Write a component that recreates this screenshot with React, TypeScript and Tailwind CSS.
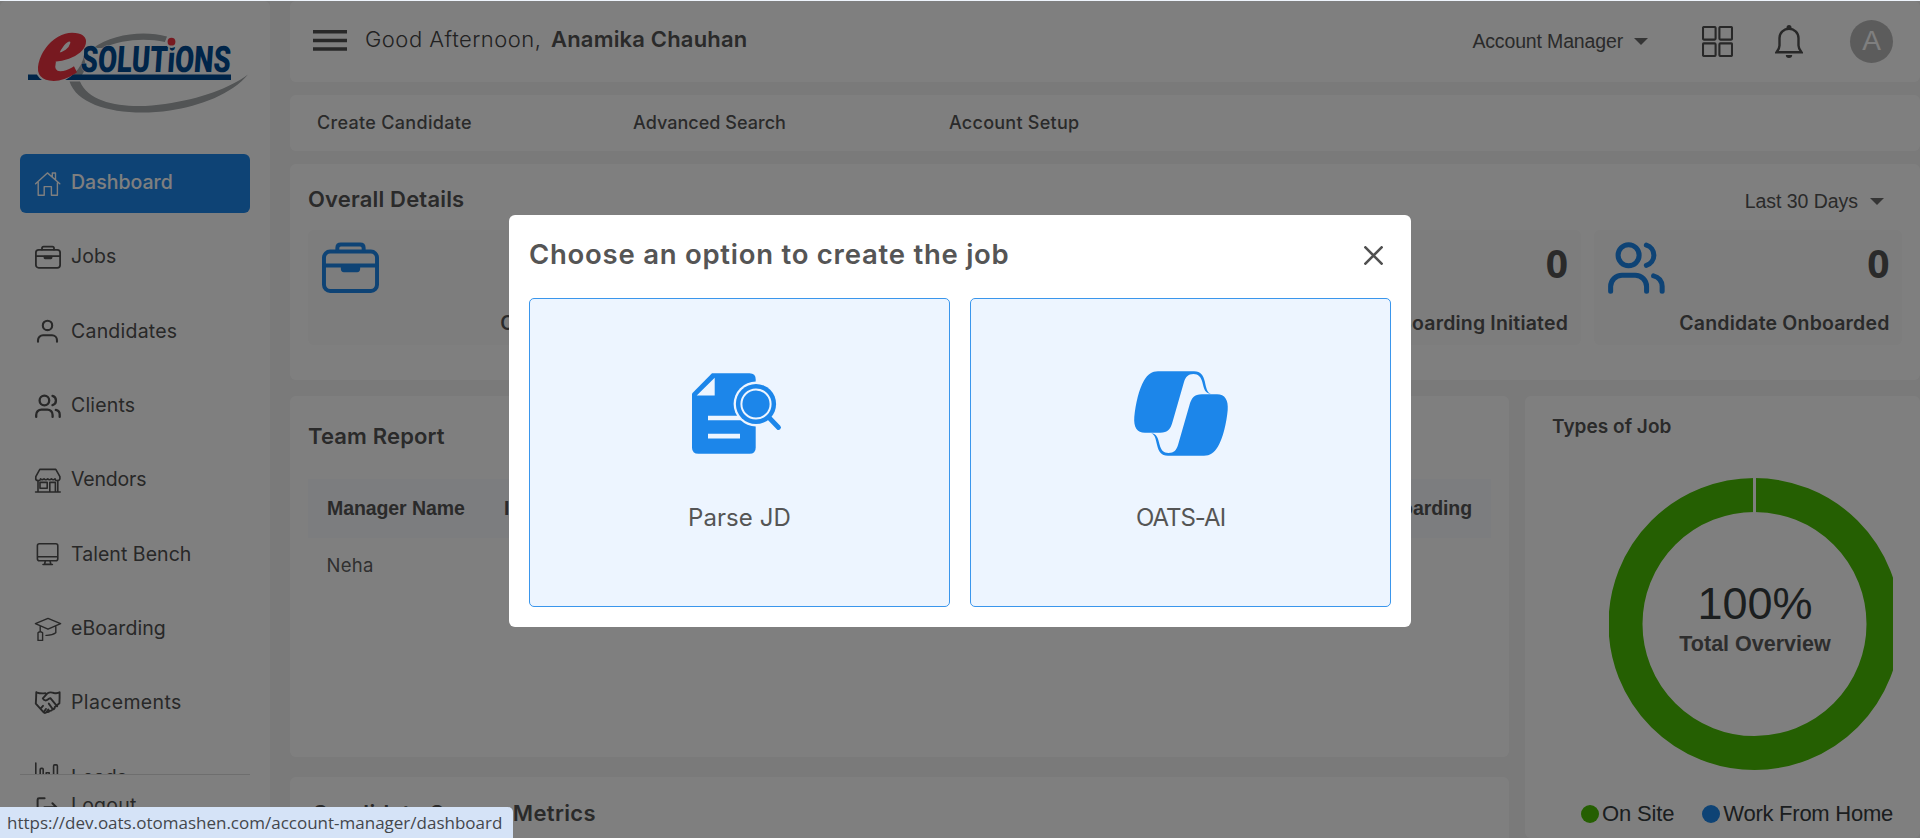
import type { ReactNode } from "react";

const INTER = "font-['Inter',sans-serif]";
const ARIAL = "font-['Liberation_Sans',Arial,sans-serif]";

type SvgProps = { className?: string; children?: ReactNode };

function Icon({ className = "size-[26px]", children }: SvgProps) {
  return (
    <svg
      viewBox="0 0 26 26"
      className={`shrink-0 overflow-visible ${className}`}
      fill="none"
      stroke="currentColor"
      strokeWidth="1.6"
      strokeLinecap="round"
      strokeLinejoin="round"
    >
      {children}
    </svg>
  );
}

const HomeIcon = () => (
  <Icon>
    <path d="M.6 12.8 12.4 1.9 24.8 12.8M17.3 5.6V2h3.2v6.6M3.2 11.4v12.8h6v-8.6h7.2v8.6h6V11.4" strokeWidth="1.4" />
  </Icon>
);

const BriefcaseIcon = ({ className }: SvgProps) => (
  <Icon className={className}>
    <g strokeWidth="1.8">
      <rect x=".9" y="4.8" width="24.2" height="18" rx="2.8" />
      <path d="M7 4.6V3.2Q7 1.6 8.6 1.6h8.8Q19 1.6 19 3.2v1.4M1 11.2h24" />
      <path d="M9.5 11.6h7v1.2q0 .5-.5.5H10q-.5 0-.5-.5z" fill="currentColor" />
    </g>
  </Icon>
);

const UserIcon = () => (
  <Icon>
    <g strokeWidth="2.1">
      <circle cx="12.5" cy="6.4" r="4.7" />
      <path d="M3 22.8v-1.6a5 5 0 0 1 5-5h9a5 5 0 0 1 5 5v1.6" />
    </g>
  </Icon>
);

const UsersIcon = ({ className }: SvgProps) => (
  <Icon className={className}>
    <g strokeWidth="2.3">
      <circle cx="9.4" cy="6.5" r="4.8" />
      <path d="M1.2 22.9v-2a5.2 5.2 0 0 1 5.2-5.3h6a5.2 5.2 0 0 1 5.2 5.3v2M17.5 1.9a4.8 4.8 0 0 1 0 9.2M20.8 15.9a4.9 4.9 0 0 1 3.9 4.9v2.1" />
    </g>
  </Icon>
);

const StoreIcon = () => (
  <Icon>
    <path d="M4.8 1.4h16L24.9 8.6v1.2a2.4 2.4 0 0 1-4.8 1 2.2 2.2 0 0 1-3.7 0 2.2 2.2 0 0 1-3.7 0 2.2 2.2 0 0 1-3.7 0 2.2 2.2 0 0 1-3.5 0A2.4 2.4 0 0 1 .8 9.8V8.600zM3 12.4v11.4M22.8 12.4v11.4M.6 24h24.6M5 14.4h7.2v5.8H5zM14.8 23.8v-9.4h5.6v9.4" />
  </Icon>
);

const MonitorIcon = () => (
  <Icon>
    <path d="M4.4 1.7h16.4q2 0 2 2v13q0 2-2 2H4.4q-2 0-2-2v-13q0-2 2-2zM2.4 14.7h20.4M10.4 18.9l-.9 3.4h6.4l-.9-3.4M8 22.5h9.4" />
  </Icon>
);

const CapIcon = () => (
  <Icon>
    <path d="M13 1.4 25.6 6.7 13 12.2.4 6.7zM5.2 9v5.4M3 15.8q2.200-2 4.6 0v7.6H3zM20.8 9.6v6.2q-3.600 2.8-9.8 2.6" strokeWidth="1.4" />
  </Icon>
);

const HandshakeIcon = () => (
  <Icon>
    <path
      d="M1.3 1.3Q1.2 7 .8 12.6L8.7 21.3q1.6 1.4 2.9-.3 2 .6 3-1.2 2 .3 2.9-1.5 2.2 0 2.3-2.2l4.6-3.8Q24.7 7 24.6 1.300q-2.4 1.5-5.6.7Q15 .6 12.6 2.2L7.8 7.4q1.8 3.8 5.8.5l1.8-.8 6.8 8.2M1.3 1.3q4.6 1.6 9 .9M8.7 21.300l2.2-3.4M11.6 21l1.7-2.5M5.8 17.3l2.2-2.5M13.8 12.6l3.8 5.4"
      strokeWidth="1.9"
    />
  </Icon>
);

const ChartIcon = () => (
  <Icon>
    <path d="M.8-2v26h24M5.2 24V4.4q0-1 1-1h1q1 0 1 1V24M11.2 24V7.7h3V24M18.6 24V.9q0-1 1-1h1.8q1 0 1 1V24" />
  </Icon>
);

const LogoutIcon = () => (
  <Icon>
    <path d="M9.6 4.3H4q-1.4 0-1.4 1.4V21q0 1.4 1.4 1.4h5.6M9.4 13.3h12M17.4 9.3l4 4-4 4" strokeWidth="2" />
  </Icon>
);

const Caret = ({ className = "" }: SvgProps) => (
  <svg viewBox="0 0 14 7" className={`h-[7px] w-[14px] shrink-0 fill-[#6a6a6a] ${className}`}>
    <path d="M0 0h14L7 7z" />
  </svg>
);

function Logo() {
  return (
    <svg viewBox="28 33 222 82" className="ml-[28px] h-[82px] w-[222px] overflow-visible">
      <path d="M93 48C112 34 144 30 167 36.5L165 42C145 37.5 122 39.5 102 48z" fill="#a4a8aa" />
      <path d="M69.5 81.5H80C90 106 132 109 165 104 200 99 230 88 248 74.5 232 94 200 106 170 110.5 125 117 78 108 69.5 81.5z" fill="#a4a8aa" />
      <path d="M72 80C72 68 77 62 84 56L86 68 79 80z" fill="#a4a8aa" />
      <rect x="28" y="74.5" width="203" height="5.5" fill="#004a92" />
      <text
        x="80"
        y="72.200"
        textLength="150"
        lengthAdjust="spacingAndGlyphs"
        transform="translate(5 0) skewX(-4)"
        className="font-['Roboto',sans-serif] text-[36.5px] font-black"
        fill="#004a92"
        stroke="#fff"
        strokeWidth="1"
        paintOrder="stroke"
      >
        SOLUTiONS
      </text>
      <circle cx="171.5" cy="42" r="6" fill="#fff" />
      <circle cx="171.5" cy="41.7" r="3.9" fill="#ee3340" />
      <ellipse cx="59.5" cy="58.500" rx="28" ry="21" transform="rotate(-45 59.5 58.5)" fill="#fff" />
      <text
        x="36"
        y="78"
        textLength="43"
        lengthAdjust="spacingAndGlyphs"
        transform="translate(17 0) skewX(-13)"
        className="font-['Liberation_Serif',serif] text-[92px] font-bold italic"
        fill="#ee3340"
        stroke="#ee3340"
        strokeWidth="4"
      >
        e
      </text>
    </svg>
  );
}

const navItems: { label: string; icon: ReactNode; tracking: string }[] = [
  { label: "Dashboard", icon: <HomeIcon />, tracking: "tracking-[0.02px]" },
  { label: "Jobs", icon: <BriefcaseIcon />, tracking: "tracking-[0.1px]" },
  { label: "Candidates", icon: <UserIcon />, tracking: "tracking-[0.22px]" },
  { label: "Clients", icon: <UsersIcon />, tracking: "tracking-[0.17px]" },
  { label: "Vendors", icon: <StoreIcon />, tracking: "tracking-[-0.2px]" },
  { label: "Talent Bench", icon: <MonitorIcon />, tracking: "tracking-[0.04px]" },
  { label: "eBoarding", icon: <CapIcon />, tracking: "tracking-[0.08px]" },
  { label: "Placements", icon: <HandshakeIcon />, tracking: "tracking-[0.35px]" },
  { label: "Leads", icon: <ChartIcon />, tracking: "tracking-[0.1px]" },
];

function Sidebar() {
  return (
    <aside className="flex h-full w-[270px] shrink-0 flex-col rounded-t-md bg-white pt-[32px]">
      <Logo />
      <nav className="mx-[20px] mt-[39px] flex h-[621px] shrink-0 flex-col gap-[15.35px] overflow-hidden border-b border-[#dcdcdc]">
        {navItems.map((item, i) => (
          <a
            key={item.label}
            className={`flex h-[59px] shrink-0 items-center gap-[10px] rounded-md pl-[15px] ${
              i === 0 ? "bg-[#1c86ea] font-medium text-white" : "text-[#505050]"
            }`}
          >
            {item.icon}
            <span className={`pb-[3px] text-[19.5px] leading-6 ${item.tracking}`}>{item.label}</span>
          </a>
        ))}
      </nav>
      <a className="ml-[35px] mt-[18px] flex items-center gap-[10px] text-[#505050]">
        <LogoutIcon />
        <span className="pb-[3px] text-[19.5px] leading-6 tracking-[0.2px]">Logout</span>
      </a>
    </aside>
  );
}

function Header() {
  return (
    <header className="flex h-[81px] items-center rounded-md bg-white pl-[23px] pr-[27px] text-[#555]">
      <svg viewBox="0 0 34 21" className="mb-[2px] h-[21px] w-[34px] fill-[#505050]">
        <path d="M0 0h34v3.500H0zM0 8.700h34v3.500H0zM0 17.200h34v3.500H0z" />
      </svg>
      <p className="ml-[18px] pb-[6px] text-[22px] leading-7">
        <span className="inline-block w-[186px] font-light tracking-[0.48px] text-[#444]">Good Afternoon,</span>
        <span className="font-semibold tracking-[0.18px]">Anamika Chauhan</span>
      </p>
      <span className={`ml-auto text-[19.5px] tracking-[-0.15px] ${ARIAL}`}>Account Manager</span>
      <Caret className="ml-[11px]" />
      <svg viewBox="0 0 31 31" className="ml-[54px] size-[31px]" fill="none" stroke="#505050" strokeWidth="2.1">
        <rect x="1" y="1" width="12.6" height="12.6" rx="1" />
        <rect x="17.4" y="1" width="12.6" height="12.6" rx="1" />
        <rect x="1" y="17.4" width="12.6" height="12.6" rx="1" />
        <rect x="17.4" y="17.4" width="12.6" height="12.6" rx="1" />
      </svg>
      <svg viewBox="0 0 28 33" className="ml-[42px] h-[33px] w-[28px]" fill="none" stroke="#505050">
        <path d="M4.5 20.5V13C4.5 7.5 9 3.7 14 3.700s9.5 3.8 9.5 9.3v7.5c0 3 1.5 5 3 6.8h-25c1.5-1.8 3-3.8 3-6.8z" strokeWidth="2.4" />
        <circle cx="14" cy="2.6" r="2.5" fill="#505050" stroke="none" />
        <path d="M10.8 30h6.4a3.2 3 0 0 1-6.4 0z" fill="#505050" stroke="none" />
      </svg>
      <span className={`ml-[47px] flex size-[43px] items-center justify-center rounded-full bg-[#b9b9b9] pb-[2px] text-[28px] leading-none text-white ${ARIAL}`}>
        A
      </span>
    </header>
  );
}

const actions = [
  { label: "Create Candidate", tracking: "tracking-[0.31px]" },
  { label: "Advanced Search", tracking: "tracking-[0.03px]" },
  { label: "Account Setup", tracking: "tracking-[0.25px]" },
];

const stats = [
  { label: "Open Jobs", icon: "jobs" },
  { label: "Submissions", icon: "users" },
  { label: "Interviews", icon: "users" },
  { label: "eBoarding Initiated", icon: "users" },
  { label: "Candidate Onboarded", icon: "users" },
];

function OverallDetails() {
  return (
    <section className="h-[216px] rounded-md bg-white pl-[18px] pr-[18px]">
      <div className="flex h-[66px] items-center justify-between pr-[18px] pt-[3px]">
        <h2 className="text-[22px] font-semibold leading-7 tracking-[0.18px] text-[#555]">Overall Details</h2>
        <div className={`flex items-center gap-[12px] pt-[5px] text-[19.5px] leading-6 tracking-[-0.05px] text-[#555] ${ARIAL}`}>
          Last 30 Days
          <Caret />
        </div>
      </div>
      <div className="grid grid-cols-5 gap-[13.5px]">
        {stats.map((s) => (
          <div key={s.label} className="flex h-[115px] flex-col rounded-md bg-[#fafafa] pl-[14px] pr-[12.5px] pt-[10.5px]">
            <div className="flex h-[70px] items-start justify-between">
              <span className="text-[#1c86ea]">
                {s.icon === "jobs" ? <BriefcaseIcon className="size-[57px]" /> : <UsersIcon className="size-[57px]" />}
              </span>
              <span className="-mt-px font-['Open_Sans',sans-serif] text-[39px] font-bold leading-[46px] text-[#555]">0</span>
            </div>
            <span className="text-right text-[19.5px] font-semibold leading-6 tracking-[0.18px] text-[#555]">{s.label}</span>
          </div>
        ))}
      </div>
    </section>
  );
}

function TeamReport() {
  return (
    <section className="h-[361px] rounded-md bg-white pl-[18px] pr-[18px] text-[#555]">
      <h2 className="flex h-[83px] items-center pb-[2px] text-[22px] font-semibold tracking-[0.15px]">Team Report</h2>
      <div className={`flex h-[59px] items-center bg-[#f8fafe] pl-[19px] pr-[19px] text-[19.5px] font-bold tracking-[-0.08px] ${ARIAL}`}>
        <span className="w-[177px]">Manager Name</span>
        <span>Interviews</span>
        <span className="ml-auto">eBoarding</span>
      </div>
      <div className="flex h-[55px] items-center pl-[18.5px] text-[18.5px] tracking-[0.3px] text-[#606060]">Neha</div>
    </section>
  );
}

function Donut() {
  return (
    <svg viewBox="0 0 284 292" className={`ml-[84px] h-[292px] w-[284px] overflow-hidden ${ARIAL}`}>
      <circle cx="145.5" cy="146" r="129" fill="none" stroke="#4abf04" strokeWidth="34" />
      <rect x="144" y="0" width="3" height="35" fill="#fff" />
      <text x="146" y="140.5" textAnchor="middle" fill="#373d3f" className="text-[45px]">100%</text>
      <text x="146" y="172.7" textAnchor="middle" fill="#5c5c5c" className="text-[21.5px] font-bold">Total Overview</text>
    </svg>
  );
}

function TypesOfJob() {
  return (
    <section className="flex w-[395px] shrink-0 flex-col rounded-md bg-white">
      <h2 className="ml-[27px] mt-[19px] text-[19px] font-semibold leading-6 tracking-[0.03px] text-[#555]">Types of Job</h2>
      <div className="mt-[39px]">
        <Donut />
      </div>
      <div className={`ml-[56px] mt-[29.500px] flex items-center whitespace-nowrap text-[22px] leading-7 text-[#373d3f] ${ARIAL}`}>
        <span className="size-[18px] rounded-full bg-[#4abf04]" />
        <span className="ml-[3px] tracking-[-0.15px]">On Site</span>
        <span className="ml-[28px] size-[18px] rounded-full bg-[#1c86ea]" />
        <span className="ml-[3px] tracking-[-0.25px]">Work From Home</span>
      </div>
    </section>
  );
}

function ParseIcon() {
  return (
    <svg viewBox="0 -2 96 86" className="h-[86px] w-[96px]">
      <path d="M20 .2H57.5q6.200 0 6.2 6.2v68q0 6.4-6.2 6.400H6.500Q0 80.800 0 74.400V20.500z" fill="#1c86ea" />
      <path d="M22.700 4.700v17.800H4.700zM16 42.700h40v4.600H16zM16 60.700h32v4.700H16z" fill="#edf5ff" />
      <circle cx="64" cy="31" r="22.4" fill="#edf5ff" />
      <path d="M75 42.500 86.500 54.500" stroke="#1c86ea" strokeWidth="4.800" strokeLinecap="round" />
      <circle cx="64" cy="31" r="20.1" fill="#1c86ea" />
      <circle cx="64" cy="31" r="14.6" fill="none" stroke="#edf5ff" strokeWidth="2" />
    </svg>
  );
}

function CopilotIcon() {
  const half =
    "M24 .3H60C67 .3 69.5 5 70.8 10.5C72.5 18 73 21.5 77 22.8C71 22.5 70 18 68.3 11C67 6 64.5 3 59.5 3C54 3 51.5 6 50 11L38.5 51C36.5 58 34 61.8 26 61.8H11C3 61.8-.5 56 .3 46C1.5 33 5 18 10 9.5C14 3 18 .3 24 .3Z";
  return (
    <svg viewBox="0 0 94 86" className="h-[86px] w-[94px] overflow-visible fill-[#1c86ea]">
      <path d={half} />
      <path d={half} transform="rotate(180 47 42.5)" />
    </svg>
  );
}

function OptionCard({ icon, children, tracking }: { icon: ReactNode; children: ReactNode; tracking: string }) {
  return (
    <button className="flex flex-col items-center rounded-[5px] border border-[#3a96ec] bg-[#edf5ff] pt-[72px]">
      {icon}
      <span className={`mt-[45px] text-[24px] leading-8 text-[#555] ${tracking}`}>{children}</span>
    </button>
  );
}

function CreateJobModal() {
  return (
    <div className="flex h-[412px] w-[902px] flex-col rounded-[6px] bg-white px-[20px] pb-[20px]">
      <div className="flex h-[83px] items-center justify-between pb-[4px] pr-[8px]">
        <h1 className="pb-px text-[27.5px] font-semibold leading-8 tracking-[0.75px] text-[#555]">Choose an option to create the job</h1>
        <svg viewBox="0 0 19 19" className="mt-[2px] size-[19px]" stroke="#505050" strokeWidth="2.6">
          <path d="M.5.5l18 18M18.500.5l-18 18" />
        </svg>
      </div>
      <div className="grid flex-1 grid-cols-2 gap-[20px]">
        <OptionCard icon={<ParseIcon />} tracking="tracking-[0.1px]">Parse JD</OptionCard>
        <OptionCard icon={<CopilotIcon />} tracking="tracking-[-1px]">OATS-AI</OptionCard>
      </div>
    </div>
  );
}

export default function App() {
  return (
    <div className={`relative h-[838px] w-[1920px] overflow-hidden bg-[#eef4fc] pt-px ${INTER}`}>
      <div className="flex h-[837px] bg-[#f4f4f4]">
        <Sidebar />
        <main className="ml-[20px] flex w-[1630px] flex-col">
          <Header />
          <div className="mt-[13px] flex h-[56px] shrink-0 items-center rounded-md bg-white pb-[2px] pl-[27px] text-[18px] font-medium text-[#555]">
            {actions.map((a) => (
              <span key={a.label} className={`w-[316px] ${a.tracking}`}>{a.label}</span>
            ))}
          </div>
          <div className="mt-[13px]">
            <OverallDetails />
          </div>
          <div className="mt-[16px] flex h-[442px] shrink-0 gap-[16px]">
            <div className="flex flex-1 flex-col gap-[20px]">
              <TeamReport />
              <section className="flex-1 rounded-t-md bg-white pl-[22px] pt-[20px]">
                <h2 className="text-[22px] font-semibold leading-8 tracking-[0.34px] text-[#555]">Candidate Source Metrics</h2>
              </section>
            </div>
            <TypesOfJob />
          </div>
        </main>
      </div>
      <div className="absolute inset-x-0 bottom-0 top-px flex items-center justify-center bg-black/50 pt-[3px]">
        <CreateJobModal />
      </div>
      <div className="absolute bottom-0 left-0 flex h-[31px] w-[513px] items-center rounded-tr-[5px] bg-[#d5e3f7] pl-[7px] pt-px font-['Open_Sans',sans-serif] text-[17px] text-[#44474c]">
        https://dev.oats.otomashen.com/account-manager/dashboard
      </div>
    </div>
  );
}
